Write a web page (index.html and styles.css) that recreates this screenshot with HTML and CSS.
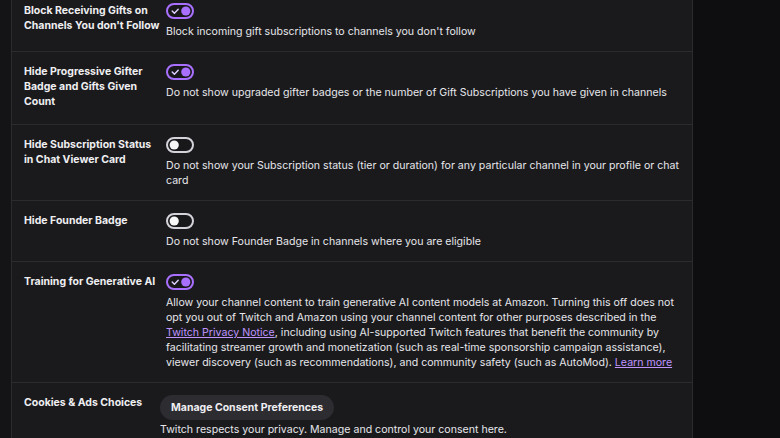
FILE: index.html
```html
<!DOCTYPE html>
<html lang="en">
<head>
<meta charset="utf-8">
<title>Privacy settings</title>
<link rel="stylesheet" href="styles.css">
</head>
<body>
<div class="page">
  <div class="card">
    <div class="row">
      <div class="title">Block Receiving Gifts on Channels You don't Follow</div>
      <div class="control">
        <svg class="toggle" width="28" height="16" viewBox="0 0 28 16"><rect x="1" y="1" width="26" height="14" rx="7" fill="#18181b" stroke="#a970ff" stroke-width="2"/><path d="M6.2 8.1 8.4 10.2 12.2 6.2" fill="none" stroke="#e2d2ff" stroke-width="1.4" stroke-linecap="round" stroke-linejoin="round"/><circle cx="19.8" cy="8" r="4.6" fill="#a970ff"/></svg>
        <p class="desc">Block incoming gift subscriptions to channels you don't follow</p>
      </div>
    </div>
    <div class="row">
      <div class="title">Hide Progressive Gifter Badge and Gifts Given Count</div>
      <div class="control">
        <svg class="toggle" width="28" height="16" viewBox="0 0 28 16"><rect x="1" y="1" width="26" height="14" rx="7" fill="#18181b" stroke="#a970ff" stroke-width="2"/><path d="M6.2 8.1 8.4 10.2 12.2 6.2" fill="none" stroke="#e2d2ff" stroke-width="1.4" stroke-linecap="round" stroke-linejoin="round"/><circle cx="19.8" cy="8" r="4.6" fill="#a970ff"/></svg>
        <p class="desc">Do not show upgraded gifter badges or the number of Gift Subscriptions you have given in channels</p>
      </div>
    </div>
    <div class="row">
      <div class="title">Hide Subscription Status in Chat Viewer Card</div>
      <div class="control">
        <svg class="toggle" width="28" height="16" viewBox="0 0 28 16"><rect x="1" y="1" width="26" height="14" rx="7" fill="#18181b" stroke="#d3d3d9" stroke-width="2"/><circle cx="8.2" cy="8" r="4.6" fill="#f7f7f8"/></svg>
        <p class="desc">Do not show your Subscription status (tier or duration) for any particular channel in your profile or chat card</p>
      </div>
    </div>
    <div class="row">
      <div class="title">Hide Founder Badge</div>
      <div class="control">
        <svg class="toggle" width="28" height="16" viewBox="0 0 28 16"><rect x="1" y="1" width="26" height="14" rx="7" fill="#18181b" stroke="#d3d3d9" stroke-width="2"/><circle cx="8.2" cy="8" r="4.6" fill="#f7f7f8"/></svg>
        <p class="desc">Do not show Founder Badge in channels where you are eligible</p>
      </div>
    </div>
    <div class="row">
      <div class="title">Training for Generative AI</div>
      <div class="control">
        <svg class="toggle" width="28" height="16" viewBox="0 0 28 16"><rect x="1" y="1" width="26" height="14" rx="7" fill="#18181b" stroke="#a970ff" stroke-width="2"/><path d="M6.2 8.1 8.4 10.2 12.2 6.2" fill="none" stroke="#e2d2ff" stroke-width="1.4" stroke-linecap="round" stroke-linejoin="round"/><circle cx="19.8" cy="8" r="4.6" fill="#a970ff"/></svg>
        <p class="desc">Allow your channel content to train generative AI content models at Amazon. Turning this off does not opt you out of Twitch and Amazon using your channel content for other purposes described in the <a href="#">Twitch Privacy Notice</a>, including using AI-supported Twitch features that benefit the community by facilitating streamer growth and monetization (such as real-time sponsorship campaign assistance), viewer discovery (such as recommendations), and community safety (such as AutoMod). <a href="#">Learn more</a></p>
      </div>
    </div>
    <div class="row">
      <div class="title">Cookies &amp; Ads Choices</div>
      <div class="control plain">
        <button class="btn" type="button">Manage Consent Preferences</button>
        <p class="desc">Twitch respects your privacy. Manage and control your consent here.</p>
      </div>
    </div>
  </div>
</div>
</body>
</html>
```
FILE: styles.css
```css
* { box-sizing: border-box; }
html, body {
  margin: 0;
  height: 100%;
  overflow: hidden;
}
body {
  background: #0e0e10;
  font-family: "Inter", "Noto Sans", sans-serif;
  font-size: 10.6px;
  color: #efeff1;
}
.page {
  display: flex;
  padding-left: 11px;
  background: linear-gradient(to right, #141416 11px, #0e0e10 11px);
  min-height: 100%;
}
.card {
  width: 682px;
  margin-top: -10px;
  background: #1a1a1d;
  border: 1px solid #2b2b2f;
  border-top-color: transparent;
}
.row {
  display: grid;
  grid-template-columns: 136px 1fr;
  padding: 12px 8px 12px 12px;
  border-top: 1px solid #2b2b2f;
}
.row:first-child { border-top: none; }
.title {
  font-size: 10.5px;
  font-weight: 700;
  line-height: 15px;
  padding-bottom: 3px;
  color: #efeff1;
}
.control {
  display: flex;
  flex-direction: column;
  align-items: flex-start;
  gap: 5px;
  padding-left: 6px;
}
.control.plain {
  padding-left: 0;
  gap: 2px;
}
.toggle { display: block; }
.desc {
  margin: 0;
  line-height: 15px;
  color: #e6e6ea;
}
.desc a {
  color: #bf94ff;
  text-decoration: underline;
}
.btn {
  height: 25px;
  padding: 0 11px;
  border: none;
  border-radius: 13px;
  background: #2c2c31;
  color: #efeff1;
  font-family: inherit;
  font-size: 10.5px;
  font-weight: 700;
}
```
